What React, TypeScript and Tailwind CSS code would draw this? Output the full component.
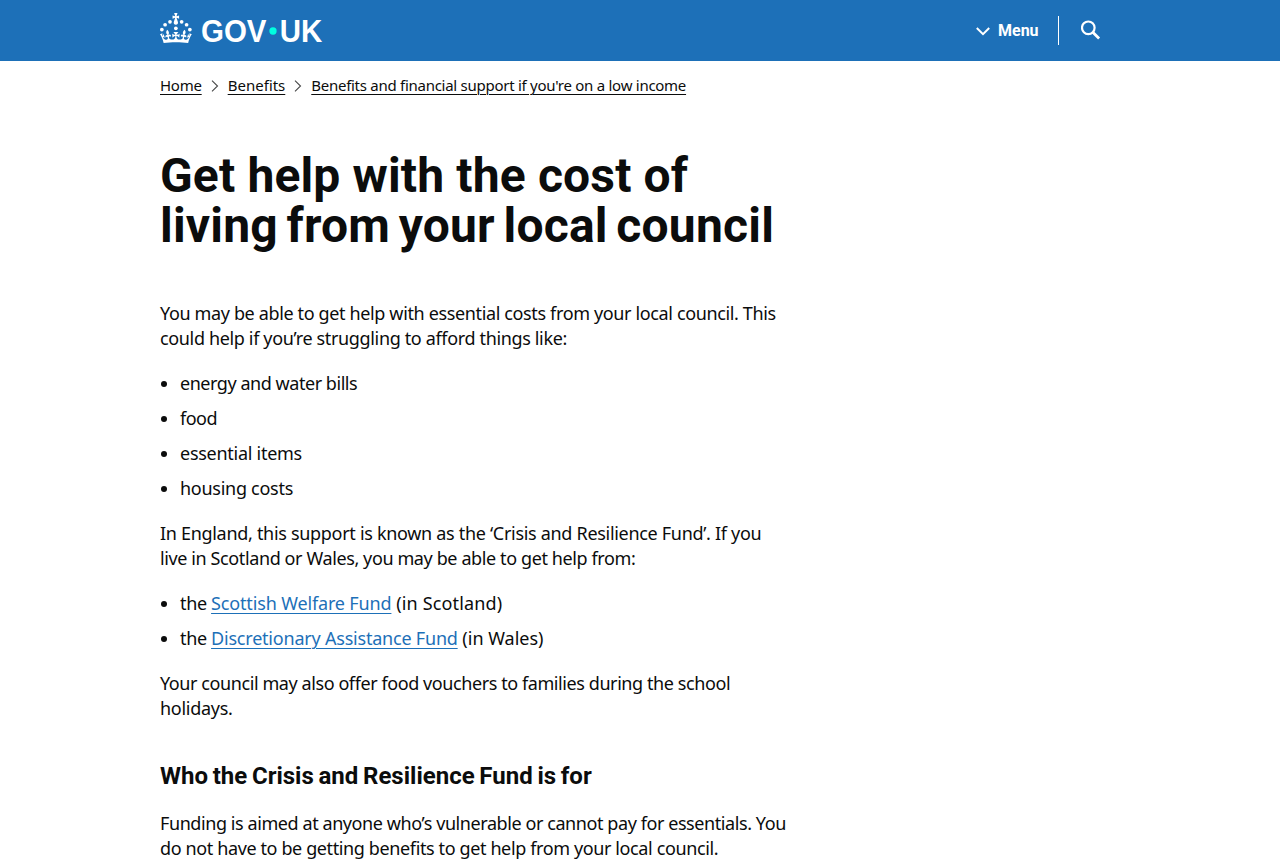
import React from 'react';
import clsx from 'clsx';

const Line = ({ children, className = '' }: { children: React.ReactNode, className?: string }) => (
  <span className={clsx('block w-fit whitespace-nowrap', className)}>{children}</span>
);

const Logo = () => (
  <svg viewBox="0 0 324 60" width="162" height="30" fill="currentColor" aria-label="GOV.UK" className="overflow-visible">
    <circle cx="20" cy="17.6" r="3.7" />
    <circle cx="10.2" cy="23.5" r="3.7" />
    <circle cx="3.7" cy="33.2" r="3.7" />
    <circle cx="31.7" cy="30.6" r="3.7" />
    <circle cx="43.3" cy="17.6" r="3.7" />
    <circle cx="53.2" cy="23.5" r="3.7" />
    <circle cx="59.7" cy="33.2" r="3.7" />
    <path d="M33.1,9.8c.2-.1.3-.3.5-.5l4.6,2.4v-6.8l-4.6,1.5c-.1-.2-.3-.3-.5-.5l1.9-5.9h-6.7l1.9,5.9c-.2.1-.3.3-.5.5l-4.6-1.5v6.8l4.6-2.4c.1.2.3.3.5.5l-2.6,8c-.9,2.8,1.2,5.7,4.1,5.7h0c3,0,5.1-2.9,4.1-5.7l-2.6-8ZM37,37.9s-3.4,3.8-4.1,6.1c2.2,0,4.2-.5,6.4-2.8l-.7,8.5c-2-2.8-4.4-4.1-5.7-3.8.1,3.1.5,6.7,5.8,7.2,3.7.3,6.7-1.5,7-3.8.4-2.6-2-4.3-3.7-1.6-1.4-4.5,2.4-6.1,4.9-3.2-1.9-4.5-1.8-7.7,2.4-10.9,3,4,2.6,7.3-1.2,11.1,2.4-1.3,6.2,0,4,4.6-1.2-2.8-3.7-2.2-4.2.2-.3,1.7.7,3.7,3,4.2,1.9.3,4.7-.9,7-5.9-1.3,0-2.4.7-3.9,1.7l2.4-8c.6,2.3,1.4,3.7,2.2,4.5.6-1.6.5-2.8,0-5.3l5,1.8c-2.6,3.6-5.2,8.7-7.3,17.5-7.4-1.1-15.7-1.7-24.5-1.7h0c-8.8,0-17.1.6-24.5,1.7-2.1-8.9-4.7-13.9-7.3-17.5l5-1.8c-.5,2.5-.6,3.7,0,5.3.8-.8,1.6-2.3,2.2-4.5l2.4,8c-1.5-1-2.6-1.7-3.9-1.7,2.3,5,5.2,6.2,7,5.9,2.3-.4,3.3-2.4,3-4.2-.5-2.4-3-3.1-4.2-.2-2.2-4.6,1.6-6,4-4.6-3.7-3.7-4.2-7.1-1.2-11.1,4.2,3.2,4.3,6.4,2.4,10.9,2.5-2.8,6.3-1.3,4.9,3.2-1.8-2.7-4.1-1-3.7,1.6.3,2.3,3.3,4.1,7,3.8,5.4-.5,5.7-4.2,5.8-7.2-1.3-.2-3.7,1-5.7,3.8l-.7-8.5c2.2,2.3,4.2,2.7,6.4,2.8-.7-2.3-4.1-6.1-4.1-6.1h10.6,0Z" />
    <text x="82" y="58" fontSize="61" fontWeight="700" fontFamily="Liberation Sans, sans-serif" textLength="131" lengthAdjust="spacingAndGlyphs">GOV</text>
    <circle cx="226" cy="36" r="7.3" fill="#00ffe0" />
    <text x="239.5" y="58" fontSize="61" fontWeight="700" fontFamily="Liberation Sans, sans-serif" textLength="85" lengthAdjust="spacingAndGlyphs">UK</text>
  </svg>
);

const Header = () => (
  <header className="h-[61px] bg-[#1d70b8] text-white">
    <div className="mx-auto flex h-full w-[960px] justify-between">
      <a href="#" className="pt-[13px]"><Logo /></a>
      <div className="flex items-center">
        <button className="flex items-center gap-2 font-['Roboto',sans-serif] text-base font-bold">
          <svg width="14" height="9" viewBox="0 0 14 9" fill="none" stroke="currentColor" strokeWidth="2" className="mt-0.5">
            <path d="M.8 1l6.2 6.2L13.2 1" />
          </svg>
          <span className="w-10 whitespace-nowrap">Menu</span>
        </button>
        <span className="ml-5 h-[29px] w-px bg-white" />
        <button className="mr-[19px] mb-px ml-[22px]" aria-label="Search GOV.UK">
          <svg width="20" height="20" viewBox="0 0 20 20" fill="none" stroke="currentColor">
            <circle cx="7.3" cy="7.8" r="6.3" strokeWidth="2.2" />
            <path d="M11.8 12.3l6.3 6.3" strokeWidth="2.8" />
          </svg>
        </button>
      </div>
    </div>
  </header>
);

const crumbs = [
  { label: 'Home', className: 'tracking-[-0.25px]' },
  { label: 'Benefits', className: '' },
  { label: "Benefits and financial support if you're on a low income", className: 'tracking-[-0.27px]' },
];

const Breadcrumbs = () => (
  <nav className="flex pt-[14px] text-[15px] leading-5">
    {crumbs.map((crumb, i) => (
      <React.Fragment key={crumb.label}>
        {i > 0 && (
          <svg width="8" height="12" viewBox="0 0 8 12" fill="none" stroke="#484949" strokeWidth="1.1" className="mx-[9px] mt-[5px]">
            <path d="M1 .7l5.5 5.3L1 11.3" />
          </svg>
        )}
        <a href="#" className={clsx('whitespace-nowrap underline decoration-1 underline-offset-[3px]', crumb.className)}>{crumb.label}</a>
      </React.Fragment>
    ))}
  </nav>
);

const Bullets = ({ children }: { children: React.ReactNode }) => (
  <ul className="mb-5 space-y-2.5">{children}</ul>
);

const Bullet = ({ children, className = '' }: { children: React.ReactNode, className?: string }) => (
  <li className="flex items-center">
    <span className="mt-px mr-[13px] ml-px size-1.5 rounded-full bg-[#0b0c0c]" />
    <Line className={className}>{children}</Line>
  </li>
);

const link = 'text-[#1d70b8] underline decoration-1 underline-offset-[3px]';

const App: React.FC = () => (
  <div className="h-[860px] overflow-hidden bg-white font-['Noto_Sans',sans-serif] text-[#0b0c0c]">
    <Header />
    <div className="mx-auto w-[960px]">
      <Breadcrumbs />
      <main className="pt-14 text-[18px] leading-[25px]">
        <h1 className="mb-[50px] font-['Roboto',sans-serif] text-[48px] leading-[50px] font-bold">
          <Line className="tracking-[0.15px]">Get help with the cost of</Line>
          <Line className="tracking-[0.2px] [word-spacing:-3.5px]">living from your local council</Line>
        </h1>
        <p className="mb-5">
          <Line className="tracking-[-0.36px]">You may be able to get help with essential costs from your local council. This</Line>
          <Line className="tracking-[-0.35px]">could help if you’re struggling to afford things like:</Line>
        </p>
        <Bullets>
          <Bullet className="tracking-[-0.455px]">energy and water bills</Bullet>
          <Bullet className="tracking-[-0.5px]">food</Bullet>
          <Bullet className="tracking-[-0.27px]">essential items</Bullet>
          <Bullet className="tracking-[-0.27px]">housing costs</Bullet>
        </Bullets>
        <p className="mb-5">
          <Line className="tracking-[-0.305px]">In England, this support is known as the ‘Crisis and Resilience Fund’. If you</Line>
          <Line className="tracking-[-0.39px]">live in Scotland or Wales, you may be able to get help from:</Line>
        </p>
        <Bullets>
          <Bullet className="tracking-[-0.35px]">
            the <a href="#" className={clsx(link, 'tracking-[-0.15px]')}>Scottish Welfare Fund</a>
            <span className="tracking-[0.15px]"> (in Scotland)</span>
          </Bullet>
          <Bullet className="tracking-[-0.35px]">
            the <a href="#" className={clsx(link, 'tracking-[-0.21px]')}>Discretionary Assistance Fund</a>
            <span className="tracking-[0px]"> (in Wales)</span>
          </Bullet>
        </Bullets>
        <p>
          <Line className="tracking-[-0.415px]">Your council may also offer food vouchers to families during the school</Line>
          <Line className="tracking-[-0.28px]">holidays.</Line>
        </p>
        <h2 className="mt-10 mb-5 font-['Roboto',sans-serif] text-[24px] leading-[30px] font-bold">
          <Line className="[word-spacing:-1.25px]">Who the Crisis and Resilience Fund is for</Line>
        </h2>
        <p>
          <Line className="tracking-[-0.42px]">Funding is aimed at anyone who’s vulnerable or cannot pay for essentials. You</Line>
          <Line className="tracking-[-0.38px]">do not have to be getting benefits to get help from your local council.</Line>
        </p>
      </main>
    </div>
  </div>
);

export default App;
